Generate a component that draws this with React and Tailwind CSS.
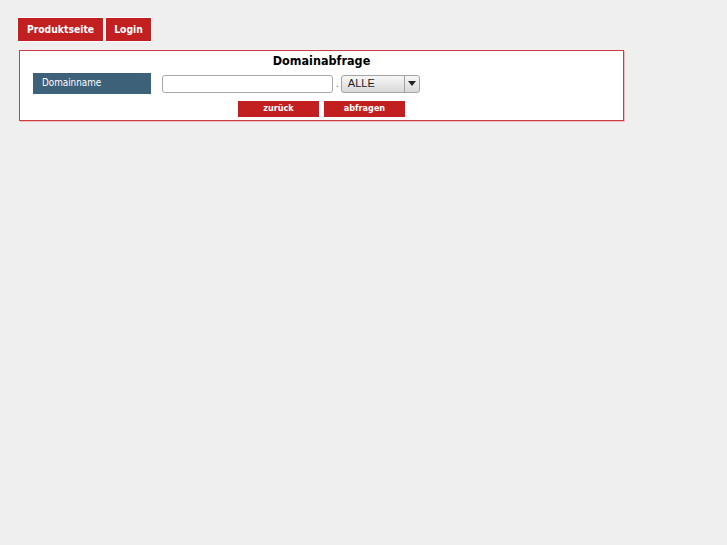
import React from 'react';

const App = () => {
    return (
        <div className="min-h-[545px] bg-[#efefef] pt-[17px] pl-[17px]" style={{ fontFamily: '"DejaVu Sans Condensed", "DejaVu Sans", Verdana, sans-serif' }}>
            <div className="flex gap-[1px]">
                <a className="flex h-[25px] w-[87px] items-center justify-center border border-white bg-[#c11f20] text-[10.3px] font-bold text-white">Produktseite</a>
                <a className="flex h-[25px] w-[47px] items-center justify-center border border-white bg-[#c11f20] text-[10.3px] font-bold text-white">Login</a>
            </div>

            <div className="mt-[8px] ml-[2px] h-[71px] w-[605px] border border-solid border-[#cc3f41] bg-white shadow-[1px_1px_0_#eebcbc]">
                <h1 className="pt-[2px] text-center text-[12.5px] font-bold leading-[16px] text-black">Domainabfrage</h1>
                <div className="mt-[4px] flex items-center">
                    <div className="ml-[13px] flex h-[21px] w-[118px] items-center bg-[#3d6179] pl-[9px] text-[9.8px] text-white">Domainname</div>
                    <input className="ml-[11px] h-[18px] w-[171px] rounded-[3px] border border-[#a8a8a8] bg-white outline-none" />
                    <span className="ml-[3px] mr-[2px] text-[10px] text-[#666]">.</span>
                    <div className="flex h-[18px] w-[79px] rounded-[3px] border border-[#a3a3a3] bg-gradient-to-b from-[#f7f7f7] to-[#d9d9d9]">
                        <span className="flex flex-1 items-center pl-[6px] text-[11px] text-[#222]" style={{ fontFamily: '"Liberation Sans", Arial, sans-serif' }}>ALLE</span>
                        <span className="flex w-[15px] items-center justify-center border-l border-[#a3a3a3]">
                            <svg width="8" height="5" viewBox="0 0 8 5"><path d="M0 0h8L4 5z" fill="#222" /></svg>
                        </span>
                    </div>
                </div>
                <div className="mt-[7px] flex justify-center gap-[5px]">
                    <button className="h-[16px] w-[81px] bg-[#c11f20] text-[9px] font-bold text-white">zurück</button>
                    <button className="h-[16px] w-[81px] bg-[#c11f20] text-[9px] font-bold text-white">abfragen</button>
                </div>
            </div>
        </div>
    );
};

export default App;
